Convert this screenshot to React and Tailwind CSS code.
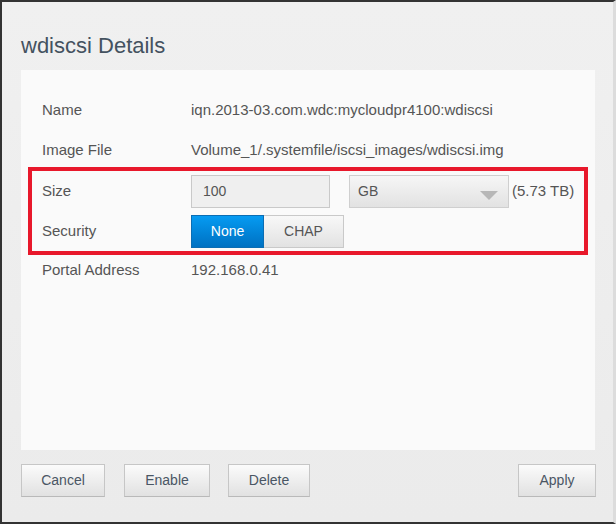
import React from 'react';

const font = { fontFamily: '"Liberation Sans", Arial, sans-serif' };

const Row = ({ label, children, inset }) => (
  <div className={`flex h-10 items-center ${inset ? 'pl-[10px]' : 'pl-[21px]'}`}>
    <div className="w-[149px] text-[15px] text-[#555]">{label}</div>
    <div className="flex items-center text-[15px] text-[#555]">{children}</div>
  </div>
);

const FooterButton = ({ children, className = '' }) => (
  <button
    className={`h-[33px] border border-[#c6c6c6] border-b-[#b9b9b9] bg-gradient-to-b from-[#fbfbfb] to-[#e1e1e1] text-[14px] text-[#4a5664] ${className}`}
  >
    {children}
  </button>
);

export default function App() {
  return (
    <div
      style={font}
      className="flex h-[524px] w-[616px] flex-col border-b-2 border-l-2 border-t-2 border-r-[3px] border-b-[#333] border-l-[#333] border-t-[#333] border-r-[#dcdcdc] bg-gradient-to-b from-[#f0f0f0] to-[#ebebeb] pl-[19px]"
    >
      <h1 className="pt-[32px] text-[22px] leading-[24px] text-[#44525f]">wdiscsi Details</h1>

      <div className="mt-[12px] h-[380px] w-[574px] bg-[#fafafa] pt-[20px]">
        <Row label="Name">iqn.2013-03.com.wdc:mycloudpr4100:wdiscsi</Row>
        <Row label="Image File">Volume_1/.systemfile/iscsi_images/wdiscsi.img</Row>

        <div className="-mt-[3px] ml-[7px] w-[560px] border-4 border-[#e8182b]">
          <Row label="Size" inset>
            <div className="flex h-[33px] w-[139px] items-center border border-[#c9c9c9] bg-[#efefef] pl-[11px] text-[14px] text-[#555]">
              100
            </div>
            <div className="relative ml-[19px] flex h-[33px] w-[160px] items-center border border-[#cfcfcf] bg-gradient-to-b from-[#f6f6f6] to-[#e2e2e2] pl-[8px] text-[14px] text-[#555]">
              GB
              <svg className="absolute right-[10px] top-[15px]" width="18" height="9" viewBox="0 0 18 9">
                <path d="M0 0 L18 0 L9 9 Z" fill="#b7b7b7" />
              </svg>
            </div>
            <span className="ml-[3px]">(5.73 TB)</span>
          </Row>
          <Row label="Security" inset>
            <button className="h-[33px] w-[73px] border border-[#0b6db3] bg-gradient-to-b from-[#069bf2] to-[#0071c2] text-[14px] text-white">
              None
            </button>
            <button className="h-[33px] w-[80px] border border-l-0 border-[#c9c9c9] bg-gradient-to-b from-[#f8f8f8] to-[#e2e2e2] text-[14px] text-[#555]">
              CHAP
            </button>
          </Row>
        </div>

        <div className="-mt-[5px]">
          <Row label="Portal Address">192.168.0.41</Row>
        </div>
      </div>

      <div className="mt-[14px] flex w-[575px] items-center">
        <FooterButton className="w-[84px]">Cancel</FooterButton>
        <FooterButton className="ml-[19px] w-[86px]">Enable</FooterButton>
        <FooterButton className="ml-[18px] w-[82px]">Delete</FooterButton>
        <FooterButton className="ml-auto w-[78px]">Apply</FooterButton>
      </div>
    </div>
  );
}
